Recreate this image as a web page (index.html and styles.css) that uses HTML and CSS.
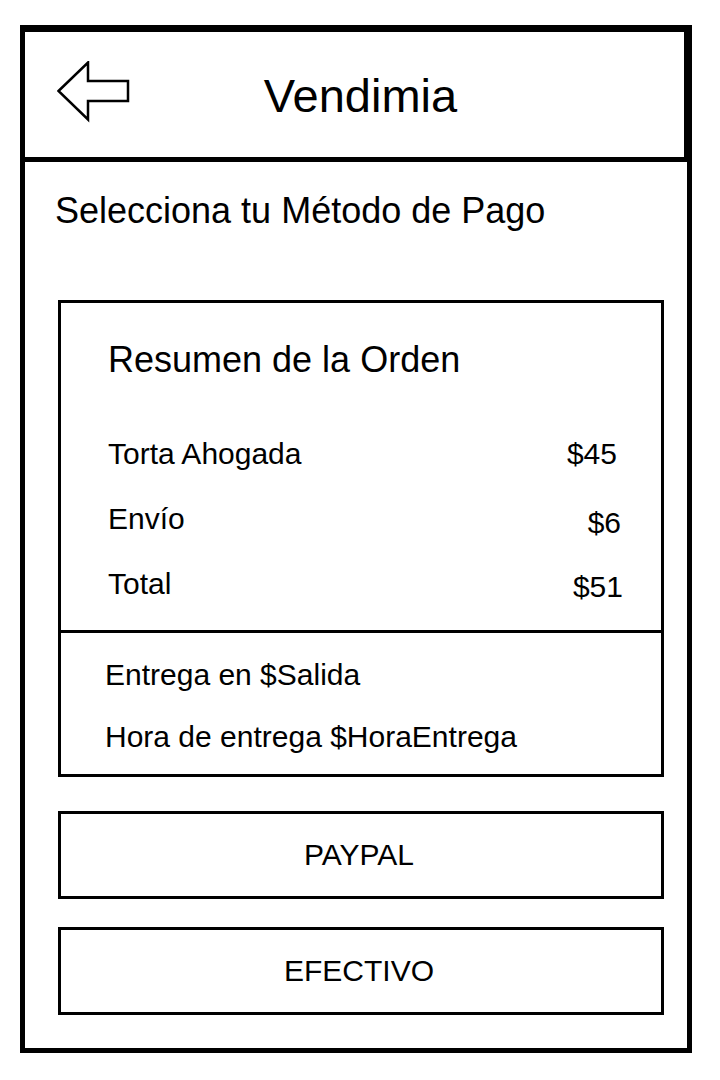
FILE: index.html
```html
<!DOCTYPE html>
<html lang="es">
<head>
    <meta charset="UTF-8">
    <meta name="viewport" content="width=device-width, initial-scale=1.0">
    <title>Vendimia - Método de Pago</title>
    <link rel="stylesheet" href="styles.css">
</head>
<body>

<div class="phone">
    <header class="topbar">
        <a class="back" href="#" aria-label="Regresar">
            <svg width="74" height="62" viewBox="0 0 74 62">
                <polygon points="1.5,30 31,1.5 31,20 71,20 71,40 31,40 31,58.5" fill="#fff" stroke="#000" stroke-width="2.5" stroke-linejoin="miter"/>
            </svg>
        </a>
        <h1 class="title">Vendimia</h1>
        <span></span>
    </header>

    <main class="content">
        <h2 class="subtitle">Selecciona tu Método de Pago</h2>

        <section class="summary">
            <div class="summary-top">
                <h3 class="summary-title">Resumen de la Orden</h3>
                <div class="rows">
                    <div class="row"><span>Torta Ahogada</span><span class="price">$45</span></div>
                    <div class="row"><span>Envío</span><span class="price shift-a">$6</span></div>
                    <div class="row"><span>Total</span><span class="price shift-b">$51</span></div>
                </div>
            </div>
            <div class="summary-bottom">
                <p>Entrega en $Salida</p>
                <p>Hora de entrega $HoraEntrega</p>
            </div>
        </section>

        <button type="button" class="pay-btn">PAYPAL</button>
        <button type="button" class="pay-btn">EFECTIVO</button>
    </main>
</div>

</body>
</html>
```

FILE: styles.css
```css
/* Global */
body {
    margin: 0;
    background: #fff;
    font-family: "Liberation Sans", Arial, sans-serif;
    color: #000;
}

/* Phone frame */
.phone {
    box-sizing: border-box;
    width: 672px;
    margin: 25px 0 0 20px;
    border: 5px solid #000;
    border-top-width: 7px;
}

/* Header */
.topbar {
    display: grid;
    grid-template-columns: 1fr auto 1fr;
    height: 125px;
    padding-left: 12px;
    border-bottom: 5px solid #000;
    border-right: 3px solid #000;
}

.back {
    align-self: start;
    margin: 29px 0 0 20px;
    width: 74px;
    height: 62px;
}

.back svg {
    display: block;
}

.title {
    align-self: center;
    margin: 2px 0 0;
    font-size: 47px;
    font-weight: normal;
    line-height: 1;
}

/* Body */
.content {
    padding: 0 0 33px 33px;
}

.subtitle {
    margin: 31px 0 0 -3px;
    font-size: 36px;
    font-weight: normal;
    line-height: 1;
}

/* Order summary card */
.summary {
    width: 606px;
    box-sizing: border-box;
    margin-top: 71px;
    border: 3px solid #000;
}

.summary-top {
    padding: 39px 44px 31px 47px;
}

.summary-title {
    margin: 0;
    font-size: 36px;
    font-weight: normal;
    line-height: 1;
}

.rows {
    display: flex;
    flex-direction: column;
    gap: 35px;
    margin-top: 61px;
}

.row {
    display: flex;
    justify-content: space-between;
    align-items: baseline;
    font-size: 30px;
    line-height: 1;
}

.price {
    position: relative;
    top: 0;
}

.shift-a {
    top: 4px;
    right: -4px;
}

.shift-b {
    top: 3px;
    right: -6px;
}

.summary-bottom {
    border-top: 3px solid #000;
    padding: 27px 20px 22px 44px;
}

.summary-bottom p {
    margin: 0;
    font-size: 30px;
    line-height: 1;
}

.summary-bottom p + p {
    margin-top: 32px;
}

/* Payment buttons */
.pay-btn {
    display: block;
    width: 606px;
    height: 88px;
    margin-top: 34px;
    padding: 0 4px 0 0;
    border: 3px solid #000;
    background: #fff;
    color: #000;
    font-family: inherit;
    font-size: 30px;
    line-height: 1;
    cursor: pointer;
}

.pay-btn + .pay-btn {
    margin-top: 28px;
}
```
